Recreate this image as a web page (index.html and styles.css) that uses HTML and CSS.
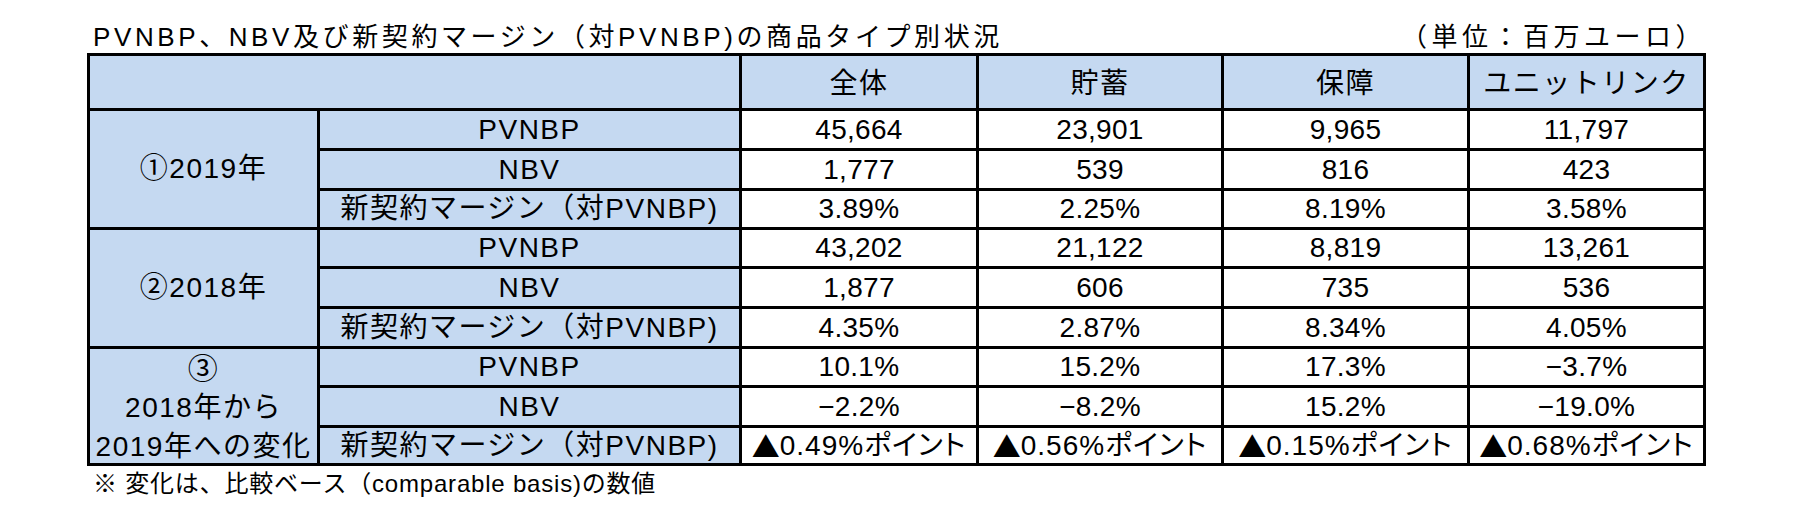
FILE: index.html
```html
<!DOCTYPE html>
<html lang="ja">
<head>
<meta charset="utf-8">
<title>PVNBP、NBV及び新契約マージン</title>
<link rel="stylesheet" href="styles.css">
</head>
<body>
<div class="page">
  <div class="titlebar">
    <span class="title">PVNBP、NBV及び新契約マージン（対PVNBP)の商品タイプ別状況</span>
    <span class="unit">（単位：百万ユーロ）</span>
  </div>
  <div class="grid">
    <div class="c hd corner"></div>
    <div class="c hd">全体</div>
    <div class="c hd">貯蓄</div>
    <div class="c hd">保障</div>
    <div class="c hd">ユニットリンク</div>

    <div class="c lbl grp">①2019年</div>
    <div class="c lbl">PVNBP</div>
    <div class="c num">45,664</div>
    <div class="c num">23,901</div>
    <div class="c num">9,965</div>
    <div class="c num">11,797</div>
    <div class="c lbl">NBV</div>
    <div class="c num">1,777</div>
    <div class="c num">539</div>
    <div class="c num">816</div>
    <div class="c num">423</div>
    <div class="c lbl">新契約マージン（対PVNBP)</div>
    <div class="c num">3.89%</div>
    <div class="c num">2.25%</div>
    <div class="c num">8.19%</div>
    <div class="c num">3.58%</div>

    <div class="c lbl grp">②2018年</div>
    <div class="c lbl">PVNBP</div>
    <div class="c num">43,202</div>
    <div class="c num">21,122</div>
    <div class="c num">8,819</div>
    <div class="c num">13,261</div>
    <div class="c lbl">NBV</div>
    <div class="c num">1,877</div>
    <div class="c num">606</div>
    <div class="c num">735</div>
    <div class="c num">536</div>
    <div class="c lbl">新契約マージン（対PVNBP)</div>
    <div class="c num">4.35%</div>
    <div class="c num">2.87%</div>
    <div class="c num">8.34%</div>
    <div class="c num">4.05%</div>

    <div class="c lbl grp grp3"><span class="circ">③</span><span>2018年から</span><span>2019年への変化</span></div>
    <div class="c lbl">PVNBP</div>
    <div class="c num">10.1%</div>
    <div class="c num">15.2%</div>
    <div class="c num">17.3%</div>
    <div class="c num">−3.7%</div>
    <div class="c lbl">NBV</div>
    <div class="c num">−2.2%</div>
    <div class="c num">−8.2%</div>
    <div class="c num">15.2%</div>
    <div class="c num">−19.0%</div>
    <div class="c lbl">新契約マージン（対PVNBP)</div>
    <div class="c pt"><span class="tri">▲</span>0.49%ポイント</div>
    <div class="c pt"><span class="tri">▲</span>0.56%ポイント</div>
    <div class="c pt"><span class="tri">▲</span>0.15%ポイント</div>
    <div class="c pt"><span class="tri">▲</span>0.68%ポイント</div>
  </div>
  <div class="note">※ 変化は、比較ベース（comparable basis)の数値</div>
</div>
</body>
</html>
```
FILE: styles.css
```css
* { box-sizing: border-box; }
html, body { margin: 0; padding: 0; background: #fff; }
body {
  font-family: "Liberation Sans", "Noto Sans CJK JP", sans-serif;
  color: #000;
}
.page {
  padding-left: 87px;
  width: 1807px;
  height: 518px;
}
.titlebar {
  width: 1619px;
  height: 53px;
  display: flex;
  justify-content: space-between;
  align-items: flex-end;
  padding: 0 0 0 6px;
  font-size: 26px;
  line-height: 32px;
  letter-spacing: 3.6px;
}
.unit { letter-spacing: 4.5px; }
.grid {
  display: grid;
  width: 1619px;
  grid-template-columns: 230px 422px 237px 245px 246px 236px;
  grid-template-rows: 55px 40px 40px 39px 39px 40px 40px 39px 40px 38px;
  border-left: 3px solid #000;
  border-top: 3px solid #000;
}
.c {
  border-right: 3px solid #000;
  border-bottom: 3px solid #000;
  display: flex;
  align-items: center;
  justify-content: center;
  font-size: 28px;
  line-height: 36px;
  letter-spacing: 1.5px;
  white-space: nowrap;
  background: #fff;
}
.num { letter-spacing: 0.3px; }
.hd, .lbl { background: #c5d9f1; }
.hd { padding-top: 4px; }
.corner { grid-column: span 2; }
.grp { grid-row: span 3; }
.grp3 {
  flex-direction: column;
  justify-content: flex-start;
  padding-top: 0;
  line-height: 39px;
}
.circ { font-size: 30px; }
.pt {
  font-feature-settings: "palt";
  letter-spacing: 1px;
}
.tri {
  font-family: "Noto Sans CJK JP", sans-serif;
  letter-spacing: 0;
}
.note {
  margin-top: 3px;
  padding-left: 6px;
  font-size: 24px;
  line-height: 30px;
  letter-spacing: 0.8px;
}
```
